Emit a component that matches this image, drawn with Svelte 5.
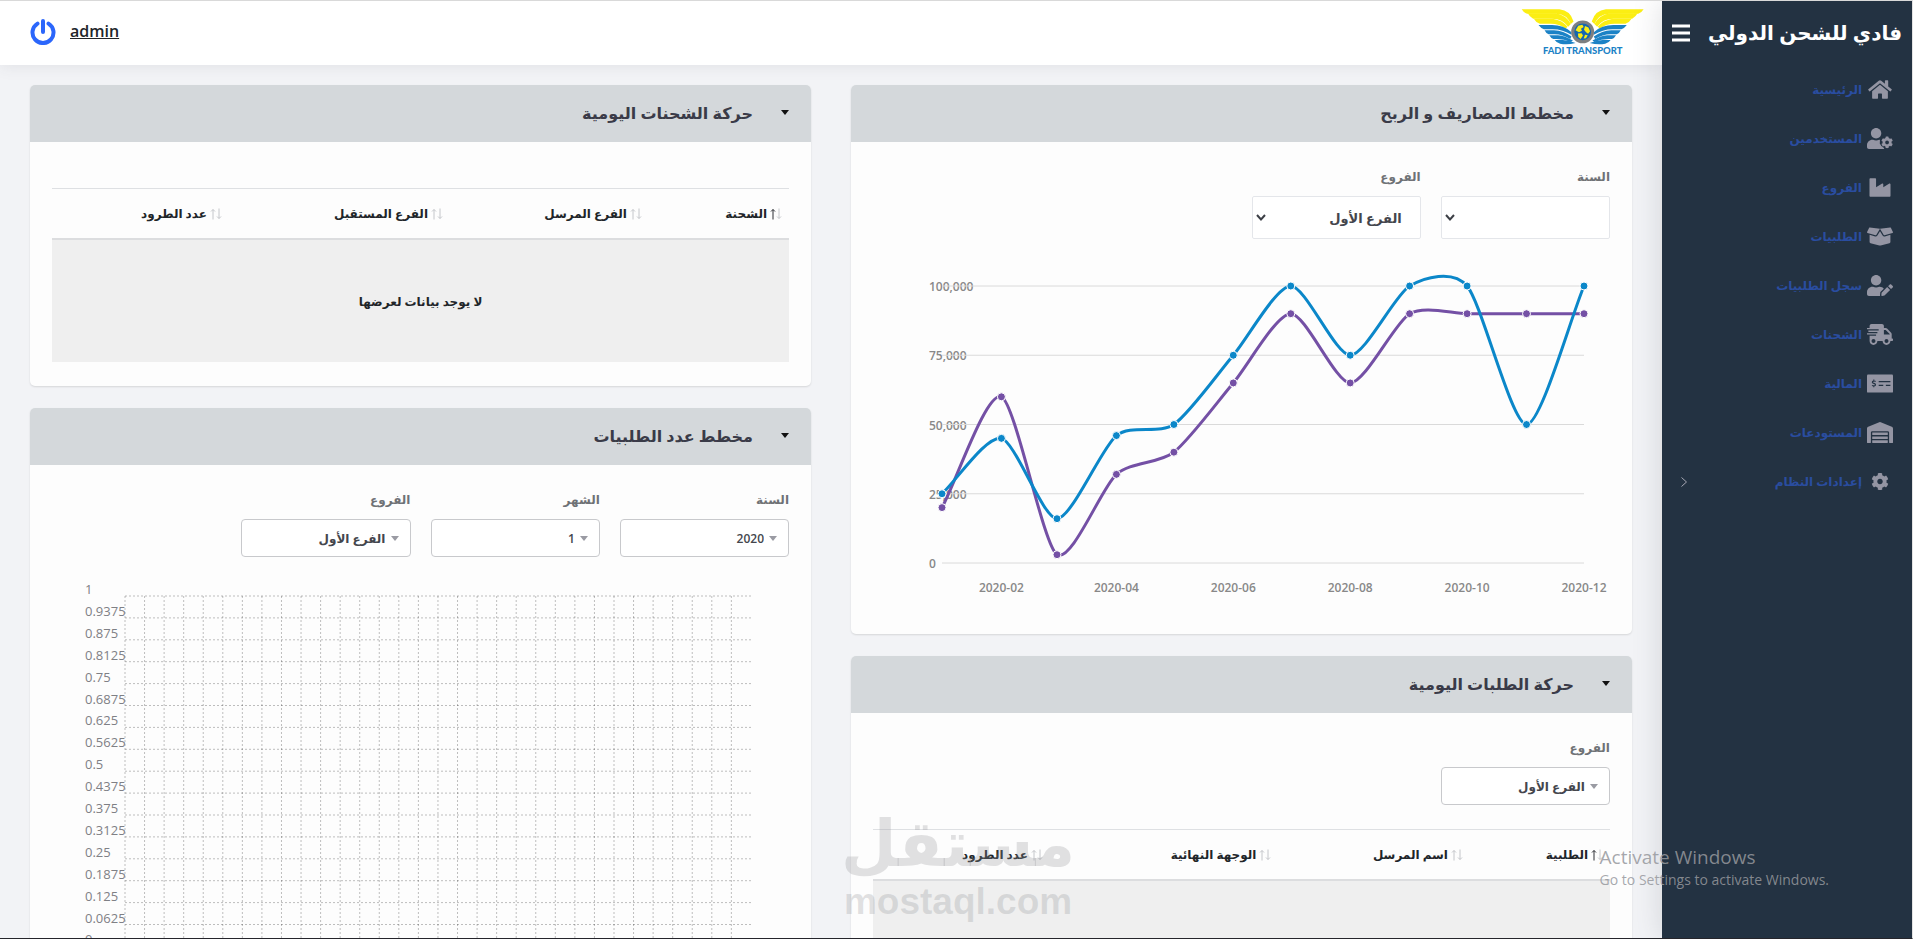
<script>
  let menuOpen = true;
  let year = "";
  let branch = "الفرع الأول";
  let ordersYear = "2020";
  let ordersMonth = "1";
  let ordersBranch = "الفرع الأول";
  let dailyBranch = "الفرع الأول";

  const branches = ["الفرع الأول"];

  const gear = "M487.4 315.7l-42.6-24.6c4.3-23.2 4.3-47 0-70.2l42.6-24.6c4.9-2.8 7.1-8.6 5.5-14-11.1-35.6-30-67.8-54.7-94.6-3.8-4.1-10-5.1-14.8-2.3L380.8 110c-17.9-15.4-38.5-27.3-60.8-35.1V25.8c0-5.6-3.9-10.5-9.4-11.7-36.7-8.2-74.3-7.8-109.2 0-5.5 1.2-9.4 6.1-9.4 11.7V75c-22.2 7.9-42.8 19.8-60.8 35.1L88.7 85.5c-4.9-2.8-11-1.9-14.8 2.3-24.7 26.7-43.6 58.9-54.7 94.6-1.7 5.4.6 11.2 5.5 14L67.3 221c-4.3 23.2-4.3 47 0 70.2l-42.6 24.6c-4.9 2.8-7.1 8.6-5.5 14 11.1 35.6 30 67.8 54.7 94.6 3.8 4.1 10 5.1 14.8 2.3l42.6-24.6c17.9 15.4 38.5 27.3 60.8 35.1v49.2c0 5.6 3.9 10.5 9.4 11.7 36.7 8.2 74.3 7.8 109.2 0 5.5-1.2 9.4-6.1 9.4-11.7v-49.2c22.2-7.9 42.8-19.8 60.8-35.1l42.6 24.6c4.9 2.8 11 1.9 14.8-2.3 24.7-26.7 43.6-58.9 54.7-94.6 1.5-5.5-.7-11.3-5.6-14.1zM256 336c-44.1 0-80-35.9-80-80s35.9-80 80-80 80 35.9 80 80-35.9 80-80 80z";

  const menu = [
    { label: "الرئيسية", box: "0 0 576 512", path: "M280.37 148.26L96 300.11V464a16 16 0 0 0 16 16l112.06-.29a16 16 0 0 0 15.92-16V368a16 16 0 0 1 16-16h64a16 16 0 0 1 16 16v95.64a16 16 0 0 0 16 16.05L464 480a16 16 0 0 0 16-16V300L295.67 148.26a12.19 12.19 0 0 0-15.3 0zM571.6 251.47L488 182.56V44.05a12 12 0 0 0-12-12h-56a12 12 0 0 0-12 12v72.61L318.47 43a48 48 0 0 0-61 0L4.34 251.47a12 12 0 0 0-1.6 16.9l25.5 31A12 12 0 0 0 45.15 301l235.22-193.74a12.19 12.19 0 0 1 15.3 0L530.9 301a12 12 0 0 0 16.9-1.6l25.5-31a12 12 0 0 0-1.7-16.93z" },
    { label: "المستخدمين", box: "0 0 640 512", smallGear: true, path: "M224 256c70.7 0 128-57.3 128-128S294.7 0 224 0 96 57.3 96 128s57.3 128 128 128zM313.6 288h-16.7c-22.2 10.2-46.9 16-72.9 16s-50.6-5.8-72.9-16h-16.7C60.2 288 0 348.2 0 422.4V464c0 26.5 21.5 48 48 48h352c8 0 15-2 21-5v-19c-20-11-38-26-52-44l-12 4-48-82 10-14c-3-16-3-32 0-48z" },
    { label: "الفروع", box: "0 0 512 512", path: "M475.115 163.781L336 252.309v-68.28c0-18.916-20.931-30.399-36.885-20.248L160 252.309V56c0-13.255-10.745-24-24-24H24C10.745 32 0 42.745 0 56v400c0 13.255 10.745 24 24 24h464c13.255 0 24-10.745 24-24V184.029c0-18.917-20.931-30.399-36.885-20.248z" },
    { label: "الطلبيات", box: "0 0 640 512", path: "M425.7 256c-16.9 0-32.8-9-41.4-23.4L320 126l-64.2 106.6c-8.7 14.5-24.6 23.5-41.5 23.5-4.5 0-9-.6-13.3-1.9L64 215v178c0 14.7 10 27.5 24.2 31l216.2 54.1c10.2 2.5 20.9 2.5 31 0L551.8 424c14.2-3.6 24.2-16.4 24.2-31V215l-137 39.1c-4.3 1.3-8.8 1.9-13.3 1.9zm212.6-112.2L586.8 41c-3.1-6.2-9.8-9.8-16.7-8.9L320 64l91.7 152.1c3.8 6.3 11.4 9.3 18.5 7.3l197.9-56.5c9.9-2.9 14.7-13.9 10.2-23.1zM53.2 41L1.7 143.8c-4.6 9.2.3 20.2 10.1 23l197.9 56.5c7.1 2 14.7-1 18.5-7.3L320 64 69.8 32.1c-6.9-.8-13.5 2.7-16.6 8.9z" },
    { label: "سجل الطلبيات", box: "0 0 640 512", path: "M224 256c70.7 0 128-57.3 128-128S294.7 0 224 0 96 57.3 96 128s57.3 128 128 128zm89.6 32h-16.7c-22.2 10.2-46.9 16-72.9 16s-50.6-5.8-72.9-16h-16.7C60.2 288 0 348.2 0 422.4V464c0 26.5 21.5 48 48 48h274.9c-2.4-6.8-3.4-14-2.6-21.3l6.8-60.9 1.2-11.1 7.9-7.9 77.3-77.3c-24.5-27.7-60-45.5-99.9-45.5zm45.3 145.3l-6.8 61c-1.1 10.2 7.5 18.8 17.6 17.6l60.9-6.8 137.9-137.9-71.7-71.7-137.9 137.8zM633 268.9L595.1 231c-9.3-9.3-24.5-9.3-33.8 0l-37.8 37.8-4.1 4.1 71.8 71.7 41.8-41.8c9.3-9.4 9.3-24.5 0-33.9z" },
    { label: "الشحنات", box: "0 0 640 512", path: "M624 352h-16V243.9c0-12.7-5.1-24.9-14.1-33.9L494 110.1c-9-9-21.2-14.1-33.9-14.1H416V48c0-26.5-21.5-48-48-48H112C85.5 0 64 21.5 64 48v48H8c-4.4 0-8 3.6-8 8v16c0 4.4 3.6 8 8 8h272c4.4 0 8 3.6 8 8v16c0 4.4-3.6 8-8 8H40c-4.4 0-8 3.6-8 8v16c0 4.4 3.6 8 8 8h208c4.4 0 8 3.6 8 8v16c0 4.4-3.6 8-8 8H8c-4.4 0-8 3.6-8 8v16c0 4.4 3.6 8 8 8h208c4.4 0 8 3.6 8 8v16c0 4.4-3.6 8-8 8H64v128c0 53 43 96 96 96s96-43 96-96h128c0 53 43 96 96 96s96-43 96-96h48c8.8 0 16-7.2 16-16v-32c0-8.8-7.2-16-16-16zM160 464c-26.5 0-48-21.5-48-48s21.5-48 48-48 48 21.5 48 48-21.5 48-48 48zm320 0c-26.5 0-48-21.5-48-48s21.5-48 48-48 48 21.5 48 48-21.5 48-48 48zm80-208H416V144h44.1l99.9 99.9V256z" },
    { label: "المالية", box: "0 0 640 512", cheque: true, path: "M24 32H616a24 24 0 0 1 24 24V456a24 24 0 0 1-24 24H24a24 24 0 0 1-24-24V56a24 24 0 0 1 24-24z" },
    { label: "المستودعات", box: "0 0 640 512", path: "M504 352H136.4c-4.4 0-8 3.6-8 8l-.1 48c0 4.4 3.6 8 8 8H504c4.4 0 8-3.6 8-8v-48c0-4.4-3.6-8-8-8zm0 96H136.1c-4.4 0-8 3.6-8 8l-.1 48c0 4.4 3.6 8 8 8h368c4.4 0 8-3.6 8-8v-48c0-4.4-3.6-8-8-8zm0-192H136.6c-4.4 0-8 3.6-8 8l-.1 48c0 4.4 3.6 8 8 8H504c4.4 0 8-3.6 8-8v-48c0-4.4-3.6-8-8-8zm106.5-139L338.4 3.7a48.15 48.15 0 0 0-36.9 0L29.5 117C11.7 124.5 0 141.9 0 161.3V504c0 4.4 3.6 8 8 8h80c4.4 0 8-3.6 8-8V256c0-17.6 14.6-32 32.6-32h382.8c18 0 32.6 14.4 32.6 32v248c0 4.4 3.6 8 8 8h80c4.4 0 8-3.6 8-8V161.3c0-19.4-11.7-36.8-29.5-44.3z" },
    { label: "إعدادات النظام", box: "-50 -50 612 612", more: true, path: gear }
  ];

  const shipmentCols = [
    { name: "الشحنة", width: 19 },
    { name: "الفرع المرسل", width: 27 },
    { name: "الفرع المستقبل", width: 30 },
    { name: "عدد الطرود", width: 24 }
  ];
  const orderCols = [
    { name: "الطلبية", width: 19 },
    { name: "اسم المرسل", width: 26 },
    { name: "الوجهة النهائية", width: 31 },
    { name: "عدد الطرود", width: 24 }
  ];

  // Income / expenses chart
  const left = 69, right = 711, top = 36, bottom = 313;
  const income = [25000, 45000, 16000, 46000, 50000, 75000, 100000, 75000, 100000, 100000, 50000, 100000];
  const expenses = [20000, 60000, 3000, 32000, 40000, 65000, 90000, 65000, 90000, 90000, 90000, 90000];
  const yTicks = [0, 25000, 50000, 75000, 100000];

  const firstDay = Date.UTC(2020, 0, 1);
  const lastDay = Date.UTC(2020, 11, 1);

  function xPos(month) {
    return left + (Date.UTC(2020, month, 1) - firstDay) / (lastDay - firstDay) * (right - left);
  }

  function yPos(value) {
    return bottom - value / 100000 * (bottom - top);
  }

  function toPoints(values) {
    return values.map((v, i) => ({ x: xPos(i), y: yPos(v) }));
  }

  // Smooth curve through the points, slope taken from both neighbours
  function smoothPath(points) {
    const slopes = points.map((p, i) => {
      const a = points[i - 1] || p;
      const b = points[i + 1] || p;
      return (b.y - a.y) / (b.x - a.x);
    });
    let d = `M${points[0].x},${points[0].y}`;
    for (let i = 1; i < points.length; i++) {
      const p = points[i - 1];
      const c = points[i];
      const step = (c.x - p.x) / 4;
      const y1 = Math.min(bottom, p.y + step * slopes[i - 1]);
      const y2 = Math.min(bottom, c.y - step * slopes[i]);
      d += `C${p.x + step},${y1},${c.x - step},${y2},${c.x},${c.y}`;
    }
    return d;
  }

  const series = [
    { color: "#7450a5", points: toPoints(expenses) },
    { color: "#0b87c9", points: toPoints(income) }
  ];
  const monthLabels = [2, 4, 6, 8, 10, 12];

  // Orders chart grid
  const rows = Array.from({ length: 17 }, (_, i) => ({ value: 1 - i / 16, y: 28 + i * 21.9 }));
  const days = Array.from({ length: 32 }, (_, i) => 73 + i * 19.56);
</script>

{#snippet caret()}
  <svg class="caret" viewBox="0 0 8 5" aria-hidden="true"><path d="M0 0h8L4 5z" /></svg>
{/snippet}

{#snippet title(text)}
  <div class="card-header">
    <button class="collapse" aria-label="طي">{@render caret()}</button>
    <h2>{text}</h2>
  </div>
{/snippet}

{#snippet dataTable(cols)}
  <table>
    <colgroup>
      {#each cols as col}
        <col style="width: {col.width}%" />
      {/each}
    </colgroup>
    <thead>
      <tr>
        {#each cols as col, i}
          <th scope="col">
            <span class="sort">
              <svg class="arrows" viewBox="0 0 12 12" aria-hidden="true">
                <path class:active={i === 0} d="M3 11.500V1.500M1 3.500L3 1.500L5 3.500" />
                <path d="M9 .5V10.500M7 8.500L9 10.500L11 8.500" />
              </svg>
              {col.name}
            </span>
          </th>
        {/each}
      </tr>
    </thead>
    <tbody>
      <tr><td colspan={cols.length}>لا يوجد بيانات لعرضها</td></tr>
    </tbody>
  </table>
{/snippet}

<div class="app" dir="rtl">
  <!-- Sidebar -->
  <aside class="sidebar">
    <div class="brand">
      <h1>فادي للشحن الدولي</h1>
      <button class="toggle" aria-label="القائمة" on:click={() => (menuOpen = !menuOpen)}>
        <svg viewBox="0 0 18 18"><path d="M0 2h18M0 9h18M0 16h18" /></svg>
      </button>
    </div>
    {#if menuOpen}
      <nav>
        {#each menu as item}
          <a href="#menu">
            <svg class="menu-icon" viewBox={item.box} aria-hidden="true">
              <path d={item.path} />
              {#if item.smallGear}
                <path d={gear} transform="translate(346 203) scale(.58)" />
              {/if}
              {#if item.cheque}
                <path class="cut" d="M288 208H576M288 304H400M464 304H576" />
                <path class="cut thin" d="M212 206C190 190 130 192 130 224C130 258 210 248 210 284C210 318 148 320 124 300M168 160V196M168 314V350" />
              {/if}
            </svg>
            <span>{item.label}</span>
            {#if item.more}
              <svg class="more" viewBox="0 0 6 10" aria-hidden="true"><path d="M.5 .5L5.500 5L.5 9.500" /></svg>
            {/if}
          </a>
        {/each}
      </nav>
    {/if}
  </aside>

  <div class="page">
    <!-- Top bar -->
    <header class="topbar">
      <svg class="logo" viewBox="36 27 368 141" role="img" aria-label="Fadi Transport">
        <defs>
          <g id="wing">
            <g fill="#fbee13">
              <path d="M38 30H150Q182 33 192 66L184 74Q172 44 140 43H54Q43 39 38 30z" />
              <path d="M56 42H138Q170 47 184 74L176 82Q160 58 128 58H72Q62 53 56 42z" />
              <path d="M74 58H130Q160 63 174 82L168 88Q150 73 124 73H92Q80 69 74 58z" />
            </g>
            <g fill="#1b82c6">
              <path d="M88 77H128Q162 77 186 98V106Q160 89 130 89H104Q94 86 88 77z" />
              <path d="M106 92H134Q162 93 186 111L182 118Q160 104 136 104H118Q110 101 106 92z" />
              <path d="M120 107H146Q167 108 190 123L184 127Q164 118 142 118H132Q124 115 120 107z" />
              <path d="M136 121H160Q180 122 198 130Q174 136 152 132Q142 130 136 121z" />
            </g>
          </g>
        </defs>
        <use href="#wing" />
        <use href="#wing" transform="translate(438 0) scale(-1 1)" />
        <circle cx="219" cy="97" r="34" fill="#7d7f80" />
        <circle cx="219" cy="97" r="25" fill="#1668b0" />
        <path fill="#fbee13" d="M198 92L206 79L218 76L222 83L214 88L217 94L208 98zM205 102L216 101L220 108L213 118L206 112zM226 80L236 84L241 95L235 103L229 98L223 91zM226 106L234 107L229 116L222 117z" />
        <text x="219" y="163" text-anchor="middle">FADI TRANSPORT</text>
      </svg>
      <div class="user">
        <a href="#profile">admin</a>
        <button class="power" aria-label="خروج">
          <svg viewBox="0 0 26 26"><path d="M13 2V13M7.500 4.600A10.500 10.500 0 1 0 18.500 4.600" /></svg>
        </button>
      </div>
    </header>

    <main>
      <div class="column">
        <section class="card">
          {@render title("مخطط المصاريف و الربح")}
          <div class="card-body">
            <div class="filters">
              <div class="field">
                <label for="year">السنة</label>
                <div class="select tall">
                  <select id="year" bind:value={year}>
                    <option value=""></option>
                    <option value="2020">2020</option>
                  </select>
                  <svg class="chevron" viewBox="0 0 10 7" aria-hidden="true"><path d="M1 1L5 5.500L9 1" /></svg>
                </div>
              </div>
              <div class="field">
                <label for="branch">الفروع</label>
                <div class="select tall">
                  <select id="branch" bind:value={branch}>
                    {#each branches as b}<option>{b}</option>{/each}
                  </select>
                  <svg class="chevron" viewBox="0 0 10 7" aria-hidden="true"><path d="M1 1L5 5.500L9 1" /></svg>
                </div>
              </div>
            </div>

            <svg class="chart profit" viewBox="0 0 737 360" direction="ltr">
              {#each yTicks as tick}
                <text x="56" y={yPos(tick) + 5}>{tick.toLocaleString("en-US")}</text>
                <line x1={left} x2={right} y1={yPos(tick)} y2={yPos(tick)} />
              {/each}
              {#each monthLabels as m}
                <text x={xPos(m - 1)} y="342" text-anchor="middle">2020-{String(m).padStart(2, "0")}</text>
              {/each}
              {#each series as s}
                <path d={smoothPath(s.points)} stroke={s.color} />
              {/each}
              {#each series as s}
                {#each s.points as p}
                  <circle cx={p.x} cy={p.y} r="4" fill={s.color} />
                {/each}
              {/each}
            </svg>
          </div>
        </section>

        <section class="card">
          {@render title("حركة الطلبات اليومية")}
          <div class="card-body">
            <div class="filters">
              <div class="field">
                <label for="daily-branch">الفروع</label>
                <div class="select">
                  <select id="daily-branch" bind:value={dailyBranch}>
                    {#each branches as b}<option>{b}</option>{/each}
                  </select>
                  {@render caret()}
                </div>
              </div>
            </div>
            {@render dataTable(orderCols)}
          </div>
        </section>
      </div>

      <div class="column">
        <section class="card">
          {@render title("حركة الشحنات اليومية")}
          <div class="card-body">
            {@render dataTable(shipmentCols)}
          </div>
        </section>

        <section class="card">
          {@render title("مخطط عدد الطلبيات")}
          <div class="card-body">
            <div class="filters">
              <div class="field">
                <label for="orders-year">السنة</label>
                <div class="select">
                  <select id="orders-year" bind:value={ordersYear}><option>2020</option></select>
                  {@render caret()}
                </div>
              </div>
              <div class="field">
                <label for="orders-month">الشهر</label>
                <div class="select">
                  <select id="orders-month" bind:value={ordersMonth}><option>1</option></select>
                  {@render caret()}
                </div>
              </div>
              <div class="field">
                <label for="orders-branch">الفروع</label>
                <div class="select">
                  <select id="orders-branch" bind:value={ordersBranch}>
                    {#each branches as b}<option>{b}</option>{/each}
                  </select>
                  {@render caret()}
                </div>
              </div>
            </div>

            <svg class="chart orders" viewBox="0 0 737 440" direction="ltr">
              {#each days as x}
                <line x1={x} x2={x} y1="28" y2="378" />
              {/each}
              {#each rows as row}
                <line x1="73" x2="699" y1={row.y} y2={row.y} />
                <text x="33" y={row.y - 2}>{row.value}</text>
              {/each}
            </svg>
          </div>
        </section>
      </div>
    </main>
  </div>

  <!-- Overlays -->
  <div class="watermark" aria-hidden="true">
    <strong>مستقل</strong>
    <span>mostaql.com</span>
  </div>
  <div class="activate" dir="ltr">
    <p>Activate Windows</p>
    <small>Go to Settings to activate Windows.</small>
  </div>
</div>

<style>
  :global(body) {
    margin: 0;
    background: #f2f3f6;
  }

  * {
    box-sizing: border-box;
  }

  .app {
    position: relative;
    display: flex;
    height: 100vh;
    overflow: hidden;
    border-top: 1px solid #d9d9d9;
    border-right: 1px solid #e3e3e3;
    border-bottom: 1px solid #25252b;
    font-family: "Open Sans", "DejaVu Sans", sans-serif;
    font-size: 13px;
    font-weight: 600;
    color: #212529;
  }

  h1, h2, p {
    margin: 0;
  }

  button {
    padding: 0;
    border: 0;
    background: none;
    cursor: pointer;
    display: flex;
  }

  /* Sidebar */
  .sidebar {
    flex: 0 0 250px;
    background: #233242;
    box-shadow: 0 0 28px rgba(82, 85, 100, 0.2);
    z-index: 2;
  }

  .brand {
    display: flex;
    align-items: center;
    justify-content: space-between;
    height: 64px;
    padding: 0 10px;
  }

  .brand h1 {
    font-size: 20px;
    line-height: 32px;
    font-weight: 700;
    color: #fff;
    white-space: nowrap;
  }

  .toggle svg {
    width: 18px;
    height: 18px;
    stroke: #fff;
    stroke-width: 3;
  }

  nav a {
    display: flex;
    align-items: center;
    gap: 5px;
    height: 49px;
    padding: 0 19px;
    font-size: 12px;
    color: #2a4da0;
    text-decoration: none;
  }

  .menu-icon {
    width: 26px;
    height: 21px;
    fill: #9495a3;
  }

  .cut {
    fill: none;
    stroke: #233242;
    stroke-width: 32;
  }

  .thin {
    stroke-width: 26;
  }

  .more {
    width: 6px;
    height: 10px;
    margin-right: auto;
    fill: none;
    stroke: #a5a6b2;
  }

  /* Page */
  .page {
    flex: 1;
    min-width: 0;
    display: flex;
    flex-direction: column;
  }

  .topbar {
    display: flex;
    flex: 0 0 64px;
    align-items: center;
    justify-content: space-between;
    padding: 0 17px 2px 30px;
    background: #fff;
    box-shadow: 0 1px 15px rgba(69, 65, 78, 0.1);
    z-index: 1;
  }

  .logo {
    width: 124px;
    height: 48px;
  }

  .logo text {
    font-family: Lato, sans-serif;
    font-size: 28px;
    font-weight: 900;
    fill: #1b82c6;
  }

  .user {
    display: flex;
    align-items: center;
    gap: 14px;
  }

  .user a {
    padding-bottom: 3px;
    font-size: 16px;
    line-height: 24px;
    color: #212529;
  }

  .power svg {
    width: 26px;
    height: 26px;
    fill: none;
    stroke: #2b66fb;
    stroke-width: 4;
    stroke-linecap: round;
  }

  main {
    flex: 1;
    min-height: 0;
    display: grid;
    grid-template-columns: 1fr 1fr;
    align-items: start;
    gap: 40px;
    padding: 20px 30px;
    overflow-y: auto;
    scrollbar-width: none;
  }

  .column {
    display: flex;
    flex-direction: column;
    gap: 22px;
    min-width: 0;
  }

  .card {
    background: #fdfdfd;
    border-radius: 5px;
    box-shadow: 0 1px 2px rgba(0, 0, 0, 0.12);
    overflow: hidden;
  }

  .card-header {
    display: flex;
    align-items: center;
    gap: 28px;
    height: 57px;
    padding: 0 22px 2px;
    background: #d4d8db;
  }

  .card-header h2 {
    font-size: 16px;
    line-height: 28px;
    font-weight: 600;
    color: #3a3b48;
  }

  .caret {
    width: 8px;
    height: 5px;
    fill: #111;
  }

  .card-body {
    padding: 22px 22px 24px;
  }

  .filters {
    display: grid;
    grid-template-columns: repeat(4, 1fr);
    gap: 20px;
  }

  .field label {
    display: block;
    height: 26px;
    margin-bottom: 6px;
    line-height: 26px;
    font-size: 12px;
    color: #6f7276;
  }

  .select {
    position: relative;
  }

  .select select {
    width: 100%;
    height: 38px;
    padding: 0 24px 0 12px;
    border: 1px solid #c8c9cc;
    border-radius: 4px;
    background: #fff;
    appearance: none;
    font-family: inherit;
    font-size: 12px;
    font-weight: 600;
    color: #44464d;
  }

  .select.tall select {
    height: 43px;
    padding: 0 18px 0 24px;
    border-color: #e4e6ea;
    border-radius: 2px;
    font-size: 13px;
  }

  .select .caret {
    position: absolute;
    top: 17px;
    right: 12px;
    fill: #9a9ba3;
  }

  .chevron {
    position: absolute;
    top: 18px;
    left: 4px;
    width: 10px;
    height: 7px;
    fill: none;
    stroke: #3c3f46;
    stroke-width: 2;
  }

  /* Charts */
  .chart {
    display: block;
    width: 100%;
    margin-top: 11px;
    direction: ltr;
  }

  .profit text {
    font-size: 12px;
    font-weight: 600;
    fill: #888;
  }

  .profit line {
    stroke: #dadada;
  }

  .profit path {
    fill: none;
    stroke-width: 3;
  }

  .profit circle {
    stroke: #fff;
  }

  .orders line {
    stroke: rgba(0, 0, 0, 0.25);
    stroke-dasharray: 2 2;
  }

  .orders text {
    font-size: 13px;
    font-weight: 400;
    fill: #7f8085;
  }

  /* Tables */
  table {
    width: 100%;
    margin-top: 24px;
    border-collapse: separate;
    border-spacing: 0;
    table-layout: fixed;
  }

  th {
    height: 52px;
    padding: 0 7px;
    border-top: 1px solid #dee0e3;
    border-bottom: 2px solid #dcdddf;
    font-size: 12px;
    font-weight: 700;
    text-align: right;
    white-space: nowrap;
  }

  .sort {
    display: flex;
    align-items: center;
    gap: 3px;
  }

  .arrows {
    flex: none;
    width: 12px;
    height: 12px;
    fill: none;
    stroke: #c4c6ca;
  }

  .arrows .active {
    stroke: #2b2d33;
  }

  td {
    height: 122px;
    background: #efefef;
    font-size: 12px;
    text-align: center;
  }

  /* Overlays */
  .watermark {
    position: absolute;
    left: 841px;
    bottom: 14px;
    z-index: 3;
    display: flex;
    flex-direction: column;
    align-items: center;
    color: rgba(150, 152, 155, 0.28);
    pointer-events: none;
  }

  .watermark strong {
    font-size: 64px;
    line-height: 76px;
  }

  .watermark span {
    font-family: "Liberation Sans", sans-serif;
    font-size: 37px;
    line-height: 44px;
    font-weight: 700;
  }

  .activate {
    position: absolute;
    right: 83px;
    bottom: 48px;
    z-index: 3;
    font-family: "Open Sans", sans-serif;
    font-weight: 400;
    color: rgba(150, 152, 157, 0.85);
    pointer-events: none;
  }

  .activate p {
    font-size: 19px;
    line-height: 26px;
  }

  .activate small {
    display: block;
    font-size: 14px;
    line-height: 20px;
  }
</style>
